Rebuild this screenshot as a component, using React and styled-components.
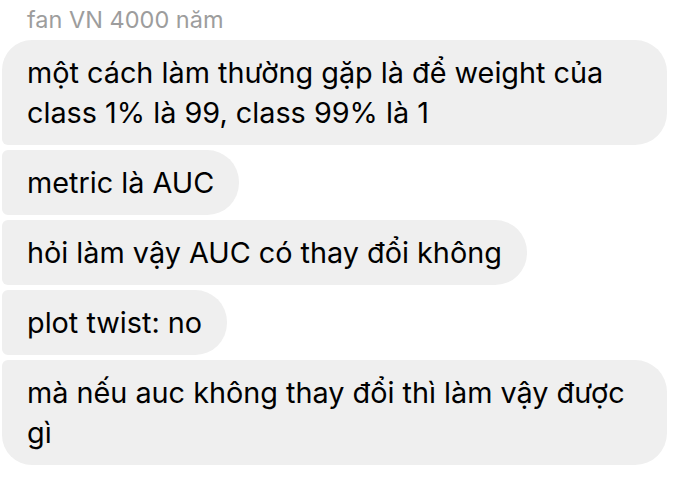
import React from 'react';
import styled, { createGlobalStyle } from 'styled-components';

const GlobalStyle = createGlobalStyle`
  html, body {
    margin: 0;
    padding: 0;
    background: #fff;
  }
  body {
    font-family: Inter, "Liberation Sans", Arial, sans-serif;
    -webkit-font-smoothing: antialiased;
  }
`;

const Thread = styled.div`
  display: flex;
  flex-direction: column;
  align-items: flex-start;
  gap: 5px;
  padding: 0 0 0 2px;
  width: 678px;
  box-sizing: border-box;
`;

const Sender = styled.div`
  height: 35px;
  box-sizing: border-box;
  padding: 6px 0 0 25px;
  font-size: 23.5px;
  line-height: 27px;
  color: #9d9d9d;
`;

// left side corners change with the position of the bubble in the group
const radii = {
  first: '30px 32px 32px 6px',
  middle: '6px 32px 32px 6px',
  last: '6px 32px 32px 30px',
};

const Bubble = styled.div`
  box-sizing: border-box;
  max-width: 665px;
  padding: 12.5px 25px;
  background: #efefef;
  color: #000;
  font-size: 28.8px;
  line-height: 40px;
  border-radius: ${({ $pos }) => radii[$pos]};
`;

const messages = [
  { text: 'một cách làm thường gặp là để weight của class 1% là 99, class 99% là 1', pos: 'first' },
  { text: 'metric là AUC', pos: 'middle' },
  { text: 'hỏi làm vậy AUC có thay đổi không', pos: 'middle' },
  { text: 'plot twist: no', pos: 'middle' },
  { text: 'mà nếu auc không thay đổi thì làm vậy được gì', pos: 'last' },
];

export default function App() {
  return (
    <>
      <GlobalStyle />
      <Thread>
        <Sender>fan VN 4000 năm</Sender>
        {messages.map((m) => (
          <Bubble key={m.text} $pos={m.pos}>
            {m.text}
          </Bubble>
        ))}
      </Thread>
    </>
  );
}
